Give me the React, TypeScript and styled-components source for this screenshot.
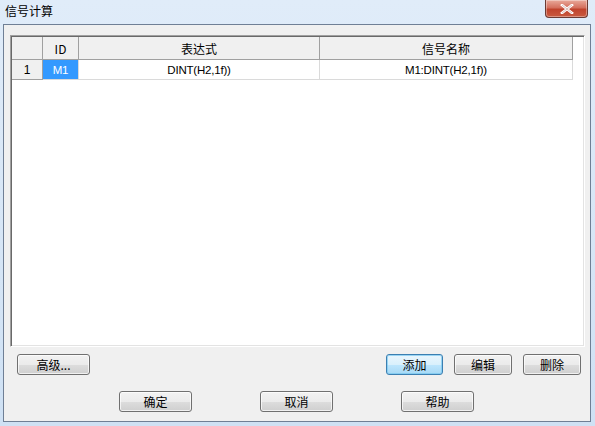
import React from 'react';
import styled, { createGlobalStyle } from 'styled-components';

const GlobalStyle = createGlobalStyle`
  html, body {
    margin: 0;
    padding: 0;
    width: 595px;
    height: 426px;
    overflow: hidden;
  }
`;

interface Row {
  id: string;
  expr: string;
  name: string;
}

const rows: Row[] = [{ id: 'M1', expr: 'DINT(H2,1f))', name: 'M1:DINT(H2,1f))' }];

const cols = ['31px', '36px', '241px', '253px'];

const App: React.FC = () => {
  return (
    <>
      <GlobalStyle />
      <Window>
        <TitleBar>
          <Title>信号计算</Title>
          <CloseButton>
            <svg width="14" height="10" viewBox="0 0 14 10">
              <path d="M2 1 L12 9 M12 1 L2 9" stroke="#fff" strokeWidth="2.6" strokeLinecap="square" />
              <path d="M2 1 L12 9 M12 1 L2 9" stroke="#7a2a1f" strokeWidth="0.6" opacity="0.5" />
            </svg>
          </CloseButton>
        </TitleBar>
        <Client>
          <Grid>
            <HeaderRow>
              <HeadCell width={cols[0]} />
              <HeadCell width={cols[1]}>ID</HeadCell>
              <HeadCell width={cols[2]}>表达式</HeadCell>
              <HeadCell width={cols[3]}>信号名称</HeadCell>
            </HeaderRow>
            {rows.map((r, i) => (
              <DataRow key={r.id}>
                <RowHead width={cols[0]}>{i + 1}</RowHead>
                <Cell width={cols[1]} selected>{r.id}</Cell>
                <Cell width={cols[2]}>{r.expr}</Cell>
                <Cell width={cols[3]}>{r.name}</Cell>
              </DataRow>
            ))}
          </Grid>
          <ActionRow>
            <Button width="73px">高级...</Button>
            <Spacer />
            <Button width="57px" focused>添加</Button>
            <Button width="58px">编辑</Button>
            <Button width="58px">删除</Button>
          </ActionRow>
          <FooterRow>
            <Button width="73px">确定</Button>
            <Button width="73px">取消</Button>
            <Button width="73px">帮助</Button>
          </FooterRow>
        </Client>
      </Window>
    </>
  );
};

const Window = styled.div`
  width: 595px;
  height: 426px;
  display: flex;
  flex-direction: column;
  background: linear-gradient(180deg, #e0ecf9 0%, #cfe1f4 100%);
  padding: 0 4px 4px 3px;
  box-sizing: border-box;
  font-family: "Noto Sans CJK SC", "Liberation Sans", sans-serif;
`;

const TitleBar = styled.div`
  height: 24px;
  display: flex;
  align-items: flex-start;
  justify-content: space-between;
  flex-shrink: 0;
`;

const Title = styled.div`
  font-size: 12px;
  line-height: 12px;
  padding: 5px 0 0 2px;
  color: #000;
`;

const CloseButton = styled.div`
  width: 43px;
  height: 18px;
  margin-right: 3px;
  box-sizing: border-box;
  border: 1px solid #6b3a33;
  border-top: none;
  border-radius: 0 0 4px 4px;
  background: linear-gradient(180deg, #e9a99b 0%, #d4705e 45%, #c0432d 55%, #c95a3f 100%);
  box-shadow: inset 0 0 0 1px rgba(255, 255, 255, 0.35);
  display: flex;
  align-items: center;
  justify-content: center;
`;

const Client = styled.div`
  flex: 1;
  background: #f0f0f0;
  border: 1px solid #6f7f95;
  display: flex;
  flex-direction: column;
  padding: 10px 5px 9px 6px;
  min-height: 0;
`;

const Grid = styled.div`
  height: 312px;
  box-sizing: border-box;
  background: #fff;
  border-top: 1px solid #a0a0a0;
  border-left: 1px solid #a0a0a0;
  border-right: 1px solid #fff;
  border-bottom: 1px solid #fff;
  box-shadow: inset 1px 1px 0 #696969, inset -1px -1px 0 #e3e3e3;
  padding: 1px;
  overflow: hidden;
`;

const HeaderRow = styled.div`
  display: flex;
  height: 23px;
`;

const HeadCell = styled.div<{ width: string }>`
  width: ${(p) => p.width};
  box-sizing: border-box;
  background: #f0f0f0;
  border-right: 1px solid #a0a0a0;
  border-bottom: 1px solid #a0a0a0;
  display: flex;
  align-items: center;
  justify-content: center;
  font-size: 12px;
  color: #000;
`;

const DataRow = styled.div`
  display: flex;
  height: 20px;
`;

const RowHead = styled.div<{ width: string }>`
  width: ${(p) => p.width};
  box-sizing: border-box;
  background: #f0f0f0;
  border-right: 1px solid #a0a0a0;
  border-bottom: 1px solid #a0a0a0;
  display: flex;
  align-items: center;
  justify-content: center;
  font-family: "Liberation Sans", sans-serif;
  font-size: 12px;
  color: #000;
`;

const Cell = styled.div<{ width: string; selected?: boolean }>`
  width: ${(p) => p.width};
  box-sizing: border-box;
  background: ${(p) => (p.selected ? '#3399ff' : '#fff')};
  color: ${(p) => (p.selected ? '#fff' : '#000')};
  border-right: 1px solid #dadada;
  border-bottom: 1px solid #dadada;
  display: flex;
  align-items: center;
  justify-content: center;
  font-family: "Liberation Sans", sans-serif;
  font-size: 11.5px;
  letter-spacing: -0.2px;
`;

const ActionRow = styled.div`
  display: flex;
  gap: 11px;
  margin-top: 7px;
  padding: 0 4px 0 7px;
`;

const Spacer = styled.div`
  flex: 1;
`;

const FooterRow = styled.div`
  display: flex;
  justify-content: center;
  gap: 68px;
  margin-top: 16px;
  padding-right: 2px;
`;

const Button = styled.div<{ width: string; focused?: boolean }>`
  width: ${(p) => p.width};
  height: 21px;
  box-sizing: border-box;
  border: 1px solid ${(p) => (p.focused ? '#3c7fb1' : '#707070')};
  border-radius: 3px;
  background: ${(p) =>
    p.focused
      ? 'linear-gradient(180deg, #eaf6fd 0%, #d9f0fc 50%, #bee6fd 51%, #a7d9f5 100%)'
      : 'linear-gradient(180deg, #f2f2f2 0%, #ebebeb 50%, #dddddd 51%, #cfcfcf 100%)'};
  box-shadow: inset 0 0 0 1px ${(p) => (p.focused ? 'rgba(120, 200, 240, 0.7)' : 'rgba(255, 255, 255, 0.7)')};
  display: flex;
  align-items: center;
  justify-content: center;
  font-size: 12px;
  color: #000;
`;

export default App;
